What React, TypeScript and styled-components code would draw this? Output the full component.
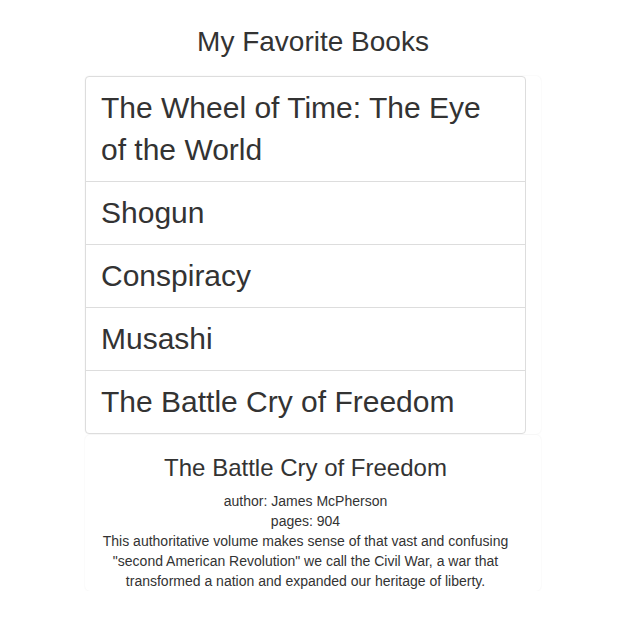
import React from "react";
import styled, { createGlobalStyle } from "styled-components";

const GlobalStyle = createGlobalStyle`
  html, body {
    margin: 0;
    padding: 0;
    background: #ffffff;
  }
  body {
    font-family: "Liberation Sans", Arial, Helvetica, sans-serif;
    color: #333333;
    font-size: 14px;
    line-height: 1.42857;
  }
  * { box-sizing: border-box; }
`;

const Page = styled.div`
  width: 456px;
  margin: 0 0 0 85px;
`;

const Title = styled.h1`
  margin: 26px 0 19px;
  font-size: 28px;
  font-weight: 400;
  line-height: 31px;
  text-align: center;
  color: #333333;
`;

const Panel = styled.div`
  padding-right: 15px;
  border-radius: 5px;
  box-shadow: 0 0 2px rgba(0, 0, 0, 0.07);
  background: #ffffff;
`;

const ListGroup = styled.ul`
  list-style: none;
  margin: 0;
  padding: 0;
  border: 1px solid #dddddd;
  border-radius: 4px;
`;

const ListItem = styled.li`
  padding: 10px 15px;
  font-size: 30px;
  line-height: 42px;
  color: #333333;
  & + & {
    border-top: 1px solid #dddddd;
  }
`;

const Detail = styled(Panel)`
  margin-top: 1px;
  text-align: center;
`;

const DetailTitle = styled.h3`
  margin: 0;
  padding: 20px 0 10px;
  font-size: 24px;
  font-weight: 400;
  line-height: 26px;
`;

const DetailLine = styled.div`
  font-size: 14px;
  line-height: 20px;
`;

const books = [
  "The Wheel of Time: The Eye of the World",
  "Shogun",
  "Conspiracy",
  "Musashi",
  "The Battle Cry of Freedom",
];

export default function App() {
  return (
    <>
      <GlobalStyle />
      <Page>
        <Title>My Favorite Books</Title>
        <Panel>
          <ListGroup>
            {books.map((b) => (
              <ListItem key={b}>{b}</ListItem>
            ))}
          </ListGroup>
        </Panel>
        <Detail>
          <DetailTitle>The Battle Cry of Freedom</DetailTitle>
          <DetailLine>author: James McPherson</DetailLine>
          <DetailLine>pages: 904</DetailLine>
          <DetailLine>
            This authoritative volume makes sense of that vast and confusing
            "second American Revolution" we call the Civil War, a war that
            transformed a nation and expanded our heritage of liberty.
          </DetailLine>
        </Detail>
      </Page>
    </>
  );
}
